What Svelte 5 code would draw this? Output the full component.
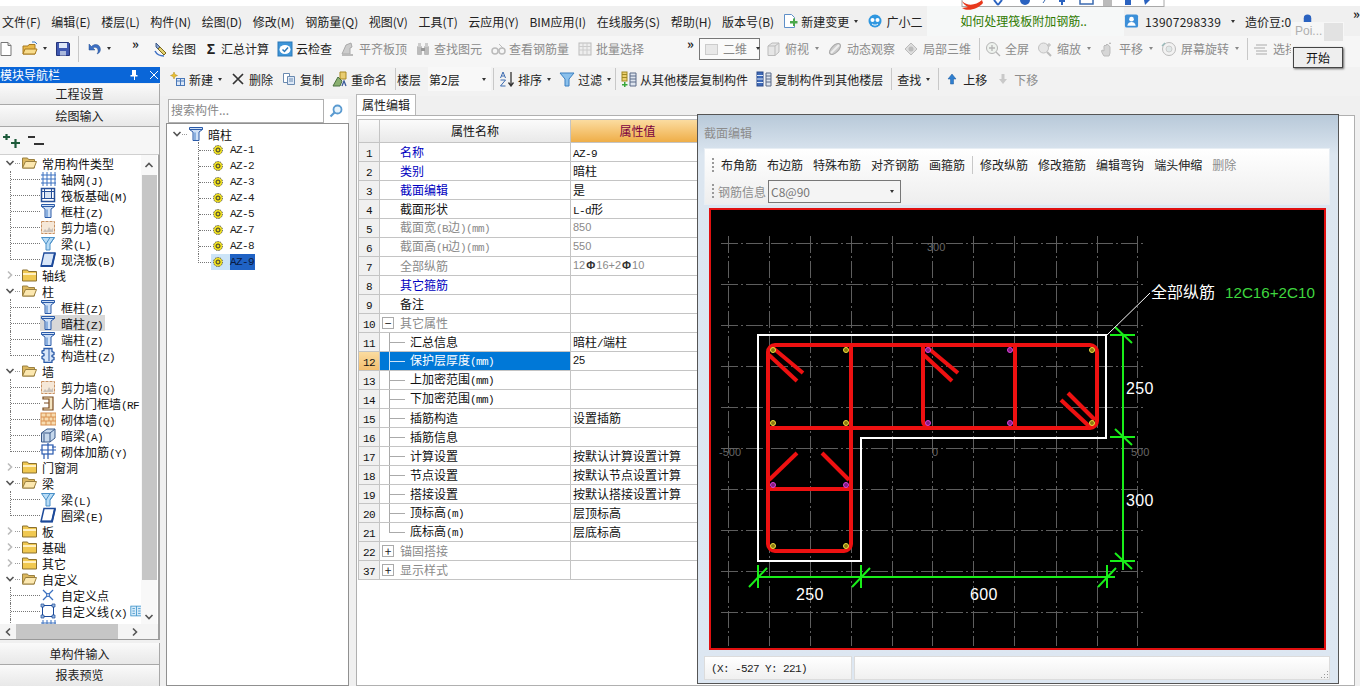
<script>
    const icons = {
        doc: '<path d="M3 1.500h7l3 3v10H3z" fill="#fff" stroke="#777"/><path d="M10 1.500v3h3" fill="#ddd" stroke="#777"/>',
        open: '<path d="M1 5h5l1-1.500h6V13H1z" fill="#e8b84a" stroke="#a87a20"/><path d="M3 8h12l-2 5H1z" fill="#f8dc8c" stroke="#a87a20"/><path d="M10 1l3 0 2 2" fill="none" stroke="#3a7bc8"/>',
        save: '<path d="M1.500 1.500h12l1 1v12h-13z" fill="#3f58b0" stroke="#26357a"/><rect x="4" y="2" width="8" height="5" fill="#dfe8f8"/><rect x="5" y="10" width="6" height="4.500" fill="#aab8dc"/>',
        undo: '<path d="M3 3v6h6L7 7c2-1.500 4.500-.5 5 2 .3 1.600-.2 3-1 4 3-1 4-4 3-6.500C12.800 3 8.500 2.500 5.500 5.500z" fill="#3d6fc4" stroke="#27508f" stroke-width=".5"/>',
        draw: '<path d="M3 2l5 5-1 3-4-4z" fill="#8aa2c8" stroke="#3d5a8a"/><path d="M7 6l6 6-2 2-6-6z" fill="#e0d070" stroke="#7d6a20"/><path d="M2 10c2 4 6 5 9 5" fill="none" stroke="#3d6fc4" stroke-width="1.500"/>',
        cloud: '<rect x="1" y="1" width="14" height="14" fill="#3e95d8" stroke="#2a78b8"/><ellipse cx="8" cy="8.500" rx="5.500" ry="4.500" fill="#fff"/><path d="M5.500 8.500l2 2 3.500-4" fill="none" stroke="#2a78b8" stroke-width="1.500"/>',
        level: '<path d="M2 13l4-9 5-2 1 4-2 1v6z" fill="#ccc" stroke="#aaa"/><rect x="2" y="13" width="11" height="2" fill="#bbb"/>',
        find: '<rect x="2" y="5" width="5" height="9" rx="1" fill="#bbb"/><rect x="9" y="5" width="5" height="9" rx="1" fill="#bbb"/><rect x="3" y="2" width="3" height="4" fill="#ccc"/><rect x="10" y="2" width="3" height="4" fill="#ccc"/><rect x="6" y="7" width="4" height="3" fill="#999"/>',
        glass: '<circle cx="5" cy="10" r="3" fill="none" stroke="#bbb" stroke-width="1.500"/><circle cx="12" cy="10" r="3" fill="none" stroke="#bbb" stroke-width="1.500"/><path d="M8 9h1M9 3l4 4" stroke="#bbb"/>',
        batch: '<rect x="2" y="2" width="12" height="12" fill="#eee" stroke="#bbb"/><path d="M2 5.500h12M2 9h12M6 2v12M10 2v12" stroke="#ccc"/>',
        square: '<rect x="1.500" y="3.500" width="12" height="10" fill="#e8e8e8" stroke="#ccc"/>',
        top: '<path d="M3 5l4-3h7v9l-4 3.500H3z" fill="#e6e6e6" stroke="#bbb"/><path d="M3 5h7v9.500M10 5l4-3" fill="none" stroke="#bbb"/>',
        orbit: '<ellipse cx="8" cy="8" rx="7" ry="3.500" transform="rotate(-45 8 8)" fill="#ccc" stroke="#aaa"/><path d="M4 12l8-8" stroke="#eee" stroke-width="2"/>',
        local: '<path d="M8 2l6 6-6 6-6-6z" fill="#ddd" stroke="#bbb"/><circle cx="8" cy="8" r="2.500" fill="#bbb"/>',
        full: '<circle cx="7" cy="7" r="5.500" fill="#eef2ee" stroke="#b5b5b5"/><path d="M7 4v6M4 7h6M11 11l4 4" stroke="#b5b5b5" stroke-width="1.300"/>',
        zoom: '<circle cx="6.500" cy="7" r="5" fill="#e6e6e6" stroke="#c2c2c2"/><path d="M10 11l4 4" stroke="#bbb" stroke-width="2"/><path d="M12 2v4M10 4h4" stroke="#bbb"/>',
        pan: '<path d="M5 15c-2-3-3-5-2-6l2 1V5l1-1 1 1V4l1-1 1 1 1 .5 1 1.500 0 6-1 3z" fill="#d6d6d6" stroke="#bbb"/><path d="M11 1l1 2h-2z" fill="#aaa"/>',
        rotate: '<circle cx="8" cy="8" r="6.500" fill="#f2f2f2" stroke="#bbb"/><circle cx="8" cy="8" r="3" fill="#e0e8e8" stroke="#ccc"/><path d="M1 5l3-3" stroke="#9bb" stroke-width="1.500"/>',
        select: '<path d="M3 4h11M1 7h11M3 10h11M3 13h11" stroke="#c4c4c4" stroke-width="1.500"/>',
        change: '<path d="M2.500 1.500h7l3 3v10h-10z" fill="#fff" stroke="#5e8fc8"/><path d="M8 8h3V5.500h2V8h2.500v2.500H13V13h-2v-2.500H8z" fill="#4aa84a"/>',
        bot: '<circle cx="8" cy="8" r="6.500" fill="#2f97e0"/><circle cx="5.500" cy="7" r="2" fill="#fff"/><circle cx="10.500" cy="7" r="2" fill="#fff"/><path d="M5 11c2 1.500 4 1.500 6 0" fill="none" stroke="#fff"/>',
        user: '<rect x="1" y="1" width="14" height="14" rx="2" fill="#3c8fd8"/><circle cx="8" cy="6" r="2.500" fill="#fff"/><path d="M3.500 13c.5-3 2.500-4 4.500-4s4 1 4.500 4z" fill="#fff"/>',
        bell: '<path d="M4 11V5a4 4 0 0 1 8 0v6z" fill="#2a62c0"/>',
        add: '<path d="M4 1l1 2.500 2.500 1L5 5.500 4 8 3 5.500.5 4.500 3 3.500z" fill="#e8c030" stroke="#b08818" stroke-width=".5"/><rect x="6.500" y="7.500" width="8" height="7" fill="#dce8f8" stroke="#4a78b8"/><path d="M6.500 10h8M10.500 7.500v7" stroke="#4a78b8"/>',
        del: '<path d="M3 3l10 10M13 3L3 13" stroke="#333" stroke-width="1.700"/>',
        copy: '<path d="M2.500 2.500h6v9h-6z" fill="#fff" stroke="#6a8ab0"/><path d="M6.500 5.500h7v8h-7z" fill="#dde8f6" stroke="#6a8ab0"/><path d="M8 8h4M8 10h4" stroke="#6a8ab0"/>',
        rename: '<path d="M8 1h6v7H8z" fill="#e8cc70" stroke="#aa8820"/><path d="M1 15l5-9 4 4-2 5z" fill="#8ab070" stroke="#4a7040"/><path d="M10 15l2-5 2 5" fill="none" stroke="#3a5a9a" stroke-width="1.300"/>',
        sort: '<path d="M4 1L1.500 7M4 1l2.500 6M2.500 5h3M1.500 9h5l-5 6h5" fill="none" stroke="#3a6ab0"/><path d="M12 1v13M9.500 11.500L12 15l2.500-3.500" fill="none" stroke="#333" stroke-width="1.300"/>',
        funnel: '<path d="M1 2h14L10 8v7H6V8z" fill="#8ac0ec" stroke="#3a7fc0"/>',
        from: '<rect x="1" y="1" width="5" height="9" fill="#ecd070" stroke="#a08820"/><path d="M1 3.500h5M1 6.500h5" stroke="#a08820"/><path d="M3 11v2h-2v1.500h2V16h1.500v-1.500h2V13h-2v-2z" fill="#3aa83a"/><path d="M9 2h6v13H9z" fill="#dde4ee" stroke="#5a6a88"/><path d="M9 5h6M9 8h6M9 11h6" stroke="#5a6a88"/>',
        to: '<rect x="1" y="1" width="6" height="14" fill="#3f6ab8" stroke="#2a4a8a"/><path d="M1 4.500h6M1 8h6M1 11.500h6" stroke="#dde8f8"/><path d="M10 2h5v13h-5z" fill="#dde4ee" stroke="#5a6a88"/><path d="M10 5h5M10 8h5M10 11h5" stroke="#5a6a88"/>',
        up: '<path d="M8 3l4 5h-2.500v5h-3V8H4z" fill="#2f7fd0" stroke="#1d5a9c" stroke-width=".5"/>',
        down: '<path d="M8 13l4-5H9.500V3h-3v5H4z" fill="#c9c9c9"/>',
        col: '<path d="M1.500 1.500h13v2l-3.500 2.500v8.500h-6V6L1.500 3.500z" fill="#cfe0f6" stroke="#2a5aa8"/><path d="M1.500 3.500h13" stroke="#2a5aa8"/><rect x="6" y="6.500" width="2" height="7.500" fill="#8ab0e0"/>',
        axis: '<path d="M3 1v14M7 1v14M11 1v14M15 1v14M1 4h15M1 8h15M1 12h15" stroke="#3a70c0"/>',
        raft: '<rect x="1.500" y="1.500" width="13" height="13" fill="#fff" stroke="#264f98" stroke-width="1.500"/><rect x="4.500" y="4.500" width="7" height="7" fill="#d8e4f4" stroke="#264f98"/><path d="M1.500 4.500h3M1.500 11.500h3M11.500 4.500h3M11.500 11.500h3M4.500 1.500v3M11.500 1.500v3" stroke="#264f98"/>',
        wall: '<rect x="1.500" y="2.500" width="13" height="12" fill="#f6e8d8" stroke="#c89060" stroke-dasharray="3 1"/><path d="M3 13l2-3 2 2 2-4 2 3 2-2v4z" fill="#c8c0b8"/>',
        beam: '<path d="M1.500 2.500h13L10 9v6H6V9z" fill="#b8dcf6" stroke="#4a90c8"/><path d="M10 2.500L6 9M14.500 2.500L10 9" stroke="#4a90c8"/>',
        slab: '<path d="M4 2h11l-3 13H1z" fill="#d8e6f8" stroke="#1d4a9a" stroke-width="1.300"/><path d="M1 15h11l3-13" fill="none" stroke="#1d4a9a" stroke-width="2"/>',
        gz: '<path d="M4 1.500h8v3l2 1v2l-2 1v1l2 1v2l-2 1v2H4v-3l-2-1v-2l2-1V7L2 6V4l2-.5z" fill="#d8e6f8" stroke="#2a5aa8" stroke-width="1.300"/><path d="M9 2v12" stroke="#2a5aa8"/>',
        door: '<path d="M3 2h10v13H3v-2h6V4H3z" fill="#f4e4c0" stroke="#7a4a20" stroke-width="1.200"/><path d="M4 8h5" stroke="#7a4a20"/>',
        brick: '<rect x="1" y="2" width="15" height="12" fill="#f8dcb0" stroke="#d89050"/><path d="M1 6h15M1 10h15M6 2v4M11 2v4M4 6v4M9 6v4M13 6v4M6 10v4M11 10v4" stroke="#d89050"/>',
        hbeam: '<path d="M1.500 6L7 2h8v9l-5 4H1.500z" fill="#c6d8ec" stroke="#3a5a8a"/><path d="M1.500 6H10v9M10 6l5-4" fill="none" stroke="#3a5a8a"/><path d="M4 7v8" stroke="#3a5a8a"/>',
        mesh: '<rect x="2" y="2" width="11" height="9" fill="none" stroke="#2a5ab0" stroke-width="1.200"/><path d="M0 7h16M8 0v16M4 11v5M12 4h4" stroke="#2a5ab0" stroke-width="1.200"/>',
        ring: '<path d="M4 1.500h11l-3 13H1z" fill="#fff" stroke="#1d4a9a" stroke-width="1.500"/><path d="M1 14.500h11l3-13" fill="none" stroke="#1d4a9a" stroke-width="2"/>',
        point: '<path d="M3 3l10 10M13 3L3 13" stroke="#3a70c0" stroke-width="1.300"/><circle cx="8" cy="8" r="1.500" fill="#e8eef8" stroke="#3a70c0"/>',
        line: '<rect x="2.500" y="2.500" width="11" height="11" fill="#fff" stroke="#1d4a9a"/><path d="M1 1h3v3H1zM12 1h3v3h-3zM1 12h3v3H1zM12 12h3v3h-3z" fill="#9ab8e0" stroke="#1d4a9a" stroke-width=".7"/>',
        book: '<rect x="1" y="2" width="14" height="12" fill="#d8ecfa" stroke="#3a90c8"/><path d="M8 2v12M3 5h3M3 8h3M3 11h3M10 5h3M10 8h3M10 11h3" stroke="#3a90c8"/>',
        folder: '<path d="M1.500 3h5l1 1.500h8V14h-14z" fill="#f0c850" stroke="#8a7030"/><path d="M2 6h13v2H2z" fill="#fff0c0"/>',
        folderOpen: '<path d="M1.500 3h5l1 1.500h6V13h-12z" fill="#dcb860" stroke="#9a8040"/><path d="M4.500 6.500h11L13 13H1.500z" fill="#fce8b0" stroke="#9a8040"/>',
        gear: '<circle cx="6" cy="6" r="4.500" fill="#f0e020" stroke="#555" stroke-dasharray="1.500 1"/><circle cx="6" cy="6" r="2" fill="#e8d810" stroke="#333"/>'
    };

    // ascii parts of bitmap-font labels are half width
    const split = (text) => text.split(/([\x00-\x7f]+)/).filter(Boolean);

    const menus = ['文件(F)', '编辑(E)', '楼层(L)', '构件(N)', '绘图(D)', '修改(M)', '钢筋量(Q)', '视图(V)', '工具(T)', '云应用(Y)', 'BIM应用(I)', '在线服务(S)', '帮助(H)', '版本号(B)'];

    const navTree = [
        { label: '常用构件类型', folder: 'open' },
        { label: '轴网(J)', icon: 'axis' },
        { label: '筏板基础(M)', icon: 'raft' },
        { label: '框柱(Z)', icon: 'col' },
        { label: '剪力墙(Q)', icon: 'wall' },
        { label: '梁(L)', icon: 'beam' },
        { label: '现浇板(B)', icon: 'slab', last: true },
        { label: '轴线', folder: 'closed' },
        { label: '柱', folder: 'open' },
        { label: '框柱(Z)', icon: 'col' },
        { label: '暗柱(Z)', icon: 'col', current: true },
        { label: '端柱(Z)', icon: 'col' },
        { label: '构造柱(Z)', icon: 'gz', last: true },
        { label: '墙', folder: 'open' },
        { label: '剪力墙(Q)', icon: 'wall' },
        { label: '人防门框墙(RF', icon: 'door' },
        { label: '砌体墙(Q)', icon: 'brick' },
        { label: '暗梁(A)', icon: 'hbeam' },
        { label: '砌体加筋(Y)', icon: 'mesh', last: true },
        { label: '门窗洞', folder: 'closed' },
        { label: '梁', folder: 'open' },
        { label: '梁(L)', icon: 'beam' },
        { label: '圈梁(E)', icon: 'ring', last: true },
        { label: '板', folder: 'closed' },
        { label: '基础', folder: 'closed' },
        { label: '其它', folder: 'closed' },
        { label: '自定义', folder: 'open' },
        { label: '自定义点', icon: 'point' },
        { label: '自定义线(X)', icon: 'line', extra: 'book' },
        { label: '', icon: 'axis' }
    ];

    const parts = ['AZ-1', 'AZ-2', 'AZ-3', 'AZ-4', 'AZ-5', 'AZ-7', 'AZ-8', 'AZ-9'];

    const props = [
        { n: 1, name: '名称', value: 'AZ-9', tone: 'blue' },
        { n: 2, name: '类别', value: '暗柱', tone: 'blue' },
        { n: 3, name: '截面编辑', value: '是', tone: 'blue' },
        { n: 4, name: '截面形状', value: 'L-d形' },
        { n: 5, name: '截面宽(B边)(mm)', value: '850', tone: 'gray', num: true },
        { n: 6, name: '截面高(H边)(mm)', value: '550', tone: 'gray', num: true },
        { n: 7, name: '全部纵筋', value: '12Φ16+2Φ10', tone: 'gray', num: true },
        { n: 8, name: '其它箍筋', value: '', tone: 'blue' },
        { n: 9, name: '备注', value: '' },
        { n: 10, name: '其它属性', value: '', tone: 'gray', box: '−' },
        { n: 11, name: '汇总信息', value: '暗柱/端柱', child: true },
        { n: 12, name: '保护层厚度(mm)', value: '25', child: true, active: true, num: true },
        { n: 13, name: '上加密范围(mm)', value: '', child: true },
        { n: 14, name: '下加密范围(mm)', value: '', child: true },
        { n: 15, name: '插筋构造', value: '设置插筋', child: true },
        { n: 16, name: '插筋信息', value: '', child: true },
        { n: 17, name: '计算设置', value: '按默认计算设置计算', child: true },
        { n: 18, name: '节点设置', value: '按默认节点设置计算', child: true },
        { n: 19, name: '搭接设置', value: '按默认搭接设置计算', child: true },
        { n: 20, name: '顶标高(m)', value: '层顶标高', child: true },
        { n: 21, name: '底标高(m)', value: '层底标高', child: true, last: true },
        { n: 22, name: '锚固搭接', value: '', tone: 'gray', box: '+' },
        { n: 37, name: '显示样式', value: '', tone: 'gray', box: '+' }
    ];

    const sectionTools = ['布角筋', '布边筋', '特殊布筋', '对齐钢筋', '画箍筋'];
    const sectionTools2 = ['修改纵筋', '修改箍筋', '编辑弯钩', '端头伸缩'];

    const gridX = [728, 769, 810, 851, 892, 932, 973, 1014, 1056, 1097, 1137];
    const gridY = [243, 284, 325, 366, 407, 448, 489, 530, 571, 612];

    const yellowBars = [[773, 350], [846, 350], [773, 423], [846, 423], [1092, 350], [1092, 423], [773, 546], [846, 546]];
    const pinkBars = [[928, 350], [1010, 350], [928, 423], [1010, 423], [773, 485], [846, 485]];

    const hooks = [
        [773, 348, 803, 373], [769, 355, 797, 381],
        [928, 348, 958, 373], [924, 355, 952, 381],
        [1068, 393, 1095, 420], [1061, 400, 1090, 427],
        [797, 453, 769, 480], [822, 453, 849, 480]
    ];

    // green dimension ticks
    const ticksH = [758, 861, 1107];
    const ticksV = [335, 437, 561];
</script>

{#snippet ic(name, cls = '')}
    <svg class="ic {cls}" viewBox="0 0 16 16" aria-hidden="true">{@html icons[name]}</svg>
{/snippet}

{#snippet tool(name, text, drop = false, off = false)}
    <span class="tool" class:off>
        {#if name}{@render ic(name)}{/if}
        {#if text}<span>{text}</span>{/if}
        {#if drop}<i class="drop"></i>{/if}
    </span>
{/snippet}

{#snippet mixed(text)}
    {#each split(text) as bit}
        {#if /^[\x00-\x7f]/.test(bit)}<span class="asc">{bit}</span>{:else}{bit}{/if}
    {/each}
{/snippet}

{#snippet chevron(open)}
    <svg class="chev" viewBox="0 0 10 10" aria-hidden="true">
        {#if open}
            <path d="M1.500 3l3.500 3.500L8.500 3" fill="none" stroke="#555" stroke-width="1.600" />
        {:else}
            <path d="M3 1.500L6.500 5 3 8.500" fill="none" stroke="#bbb" stroke-width="1.600" />
        {/if}
    </svg>
{/snippet}

<div class="app">
    <div class="strip"></div>

    <div class="menubar">
        <div class="menus">
            {#each menus as m}<span>{m}</span>{/each}
        </div>
        <div class="menu-extra">
            {@render tool('change', '新建变更', true)}
            {@render tool('bot', '广小二')}
        </div>
        <div class="news">如何处理筏板附加钢筋..</div>
        <div class="account">
            {@render tool('user', '13907298339', true)}
            <span class="beans">造价豆:0</span>
            {@render ic('bell')}
        </div>
        <span class="more">»</span>
    </div>

    <div class="toolbar">
        <div class="tb-left">
            {@render ic('doc')}
            {@render tool('open', '', true)}
            {@render ic('save')}
            <i class="sep"></i>
            {@render tool('undo', '', true)}
        </div>
        <div class="tb-mid">
            <span class="more-in">»</span>
            {@render tool('draw', '绘图')}
            <span class="tool sigma"><b>Σ</b><span>汇总计算</span></span>
            {@render tool('cloud', '云检查')}
            {@render tool('level', '平齐板顶', false, true)}
            {@render tool('find', '查找图元', false, true)}
            {@render tool('glass', '查看钢筋量', false, true)}
            {@render tool('batch', '批量选择', false, true)}
            <span class="more-in end">»</span>
        </div>
        <div class="tb-right">
            <span class="view-combo">{@render ic('square')}<span>二维</span><i class="drop"></i></span>
            {@render tool('top', '俯视', true, true)}
            {@render tool('orbit', '动态观察', false, true)}
            {@render tool('local', '局部三维', false, true)}
            <i class="sep"></i>
            {@render tool('full', '全屏', false, true)}
            {@render tool('zoom', '缩放', true, true)}
            {@render tool('pan', '平移', true, true)}
            {@render tool('rotate', '屏幕旋转', true, true)}
            <i class="sep"></i>
            {@render tool('select', '选择', false, true)}
        </div>
    </div>

    <div class="body">
        <aside class="nav">
            <div class="nav-head">
                <span>模块导航栏</span>
                <svg class="pin" viewBox="0 0 10 12" aria-hidden="true"><path d="M3 1h4v5h1.500v1.500h-2.500V11H5V7.500H1.500V6H3z" fill="#fff" /></svg>
                <svg class="close" viewBox="0 0 10 10" aria-hidden="true"><path d="M1 1l8 8M9 1L1 9" stroke="#fff" /></svg>
            </div>
            <div class="nav-btn first">工程设置</div>
            <div class="nav-btn second">绘图输入</div>
            <div class="nav-tools">
                <svg viewBox="0 0 22 16" aria-hidden="true"><path d="M1 4h7M4.500 1v6M9 10h9M13.500 6v9" stroke="#1d5a3a" stroke-width="2.200" /></svg>
                <svg viewBox="0 0 22 16" aria-hidden="true"><path d="M2 4h7M8 11h10" stroke="#333" stroke-width="2.200" /></svg>
            </div>
            <div class="nav-tree">
                <div class="nav-rows">
                    {#each navTree as row}
                        {#if row.folder}
                            <div class="row">
                                <span class="arrow">{@render chevron(row.folder === 'open')}</span>
                                <i class="stub"></i>
                                {@render ic(row.folder === 'open' ? 'folderOpen' : 'folder')}
                                <span class="lbl">{@render mixed(row.label)}</span>
                            </div>
                        {:else}
                            <div class="row">
                                <span class="twig" class:last={row.last}><i></i></span>
                                <span class="leaf" class:current={row.current}>
                                    {@render ic(row.icon)}
                                    <span class="lbl">{@render mixed(row.label)}</span>
                                </span>
                                {#if row.extra}{@render ic(row.extra, 'extra')}{/if}
                            </div>
                        {/if}
                    {/each}
                </div>
                <div class="vbar">
                    <svg viewBox="0 0 10 10" aria-hidden="true"><path d="M1.500 7L5 3.500 8.500 7" fill="none" stroke="#555" stroke-width="1.600" /></svg>
                    <div class="vthumb"></div>
                    <svg viewBox="0 0 10 10" aria-hidden="true"><path d="M1.500 3L5 6.500 8.500 3" fill="none" stroke="#555" stroke-width="1.600" /></svg>
                </div>
            </div>
            <div class="hbar">
                <svg viewBox="0 0 10 10" aria-hidden="true"><path d="M7 1.500L3.500 5 7 8.500" fill="none" stroke="#555" stroke-width="1.600" /></svg>
                <div class="hthumb"></div>
                <svg viewBox="0 0 10 10" aria-hidden="true"><path d="M3 1.500L6.500 5 3 8.500" fill="none" stroke="#555" stroke-width="1.600" /></svg>
            </div>
            <div class="nav-btn single">单构件输入</div>
            <div class="nav-btn report">报表预览</div>
        </aside>

        <div class="work">
            <div class="actions">
                {@render tool('add', '新建', true)}
                {@render tool('del', '删除')}
                {@render tool('copy', '复制')}
                {@render tool('rename', '重命名')}
                <i class="sep"></i>
                <span class="floor-label">楼层</span>
                <span class="floor">第2层<i class="drop"></i></span>
                <i class="sep"></i>
                {@render tool('sort', '排序', true)}
                {@render tool('funnel', '过滤', true)}
                <i class="sep near"></i>
                {@render tool('from', '从其他楼层复制构件')}
                {@render tool('to', '复制构件到其他楼层')}
                <i class="sep"></i>
                <span class="tool"><span>查找</span><i class="drop"></i></span>
                <i class="sep"></i>
                {@render tool('up', '上移')}
                {@render tool('down', '下移', false, true)}
            </div>

            <div class="panes">
                <div class="parts">
                    <div class="search">
                        <span class="search-box">搜索构件...</span>
                        <span class="search-btn">
                            <svg viewBox="0 0 16 16" aria-hidden="true"><circle cx="9.500" cy="6.500" r="4" fill="#e8f4fc" stroke="#5a9ad0" stroke-width="1.800" /><path d="M6.500 9.500L2.500 13.500" stroke="#5a9ad0" stroke-width="2.200" /></svg>
                        </span>
                    </div>
                    <div class="part-tree">
                        <div class="part-root">
                            <span class="arrow">{@render chevron(true)}</span>
                            <i class="stub"></i>
                            {@render ic('col')}
                            <span class="lbl">暗柱</span>
                        </div>
                        {#each parts as p, i}
                            <div class="part-row">
                                <span class="twig small" class:last={i === parts.length - 1}><i></i></span>
                                <span class="part-item" class:sel={p === 'AZ-9'}>
                                    <svg class="gear" viewBox="0 0 12 12" aria-hidden="true">{@html icons.gear}</svg>
                                    <span class="asc">{p}</span>
                                </span>
                            </div>
                        {/each}
                    </div>
                </div>

                <div class="props">
                    <div class="tabs"><span class="tab">属性编辑</span></div>
                    <div class="sheet">
                        <div class="grid">
                            <div class="grid-row head">
                                <span class="c-num"></span>
                                <span class="c-name">属性名称</span>
                                <span class="c-val">属性值</span>
                            </div>
                            {#each props as p}
                                <div class="grid-row" class:active={p.active}>
                                    <span class="c-num"><span class="asc">{p.n}</span></span>
                                    <span class="c-name {p.tone ?? ''}" class:plain={!p.child && !p.box}>
                                        {#if p.box}<span class="box">{p.box}</span>{/if}
                                        {#if p.child}<span class="branch" class:last={p.last}><i></i></span>{/if}
                                        <span>{@render mixed(p.name)}</span>
                                    </span>
                                    <span class="c-val {p.tone === 'gray' ? 'gray' : ''}" class:num={p.num}>
                                        {#if p.num}
                                            {#each p.value.split('Φ') as piece, i}
                                                {#if i > 0}<b class="rebar">Φ</b>{/if}{piece}
                                            {/each}
                                        {:else}
                                            {@render mixed(p.value)}
                                        {/if}
                                    </span>
                                </div>
                            {/each}
                        </div>
                    </div>
                </div>
            </div>
        </div>
    </div>

    <!-- floating section editor window -->
    <div class="dialog">
        <div class="dlg-title">截面编辑</div>
        <div class="dlg-tools">
            <div class="dlg-row">
                <i class="grip"></i>
                {#each sectionTools as t}<span>{t}</span>{/each}
                <i class="sep"></i>
                {#each sectionTools2 as t}<span>{t}</span>{/each}
                <span class="off">删除</span>
            </div>
            <div class="dlg-row second">
                <i class="grip"></i>
                <span class="off">钢筋信息</span>
                <span class="rebar-combo">C8@90<i class="drop"></i></span>
            </div>
        </div>
        <div class="canvas">
            <svg viewBox="711 210 613 438" role="img" aria-label="截面图">
                <g stroke="#5e5e5e" stroke-dasharray="17 3 2 3" shape-rendering="crispEdges">
                    {#each gridX as x}<line x1={x} y1="236" x2={x} y2="646" />{/each}
                    {#each gridY as y}<line x1="721" y1={y} x2="1145" y2={y} />{/each}
                </g>
                <g class="axis-num">
                    <text x="927" y="251">300</text>
                    <text x="719" y="456">-500</text>
                    <text x="932" y="456">0</text>
                    <text x="1131" y="456">500</text>
                </g>

                <path d="M758 335H1106V438H861V561H758Z" fill="none" stroke="#fff" stroke-width="2" />

                <g fill="none" stroke="#ee1111" stroke-width="4">
                    <path d="M768 428V352a7 7 0 0 1 7-7H1090a7 7 0 0 1 7 7V421a7 7 0 0 1-7 7H768" />
                    <path d="M768 428V544a7 7 0 0 0 7 7H844a7 7 0 0 0 7-7V345" />
                    <path d="M923 345V421a7 7 0 0 0 7 7M1015 345V428" />
                    <path d="M768 489H851" />
                    {#each hooks as h}<line x1={h[0]} y1={h[1]} x2={h[2]} y2={h[3]} />{/each}
                </g>

                {#each yellowBars as b}<circle cx={b[0]} cy={b[1]} r="2.500" fill="#8a7a10" stroke="#f0e040" />{/each}
                {#each pinkBars as b}<circle cx={b[0]} cy={b[1]} r="2.500" fill="#802080" stroke="#e040e0" />{/each}

                <g stroke="#19ee19" stroke-width="2" fill="none">
                    <path d="M758 577H1115M1123 335V570" />
                    {#each ticksH as x}
                        <path d="M{x} 565V588M{x - 9} 587L{x + 9} 568" />
                    {/each}
                    {#each ticksV as y}
                        <path d="M1110 {y}H1135M1115 {y - 8}L1132 {y + 8}" />
                    {/each}
                </g>

                <path d="M1107 335L1150 293" stroke="#fff" />
                <text class="note" x="1151" y="298">全部纵筋</text>
                <text class="note-green" x="1225" y="298">12C16+2C10</text>
                <g class="dim">
                    <text x="1126" y="394">250</text>
                    <text x="1126" y="506">300</text>
                    <text x="796" y="600">250</text>
                    <text x="970" y="600">600</text>
                </g>
            </svg>
        </div>
        <div class="dlg-status">
            <span class="coord"><span class="asc">(X: -527 Y: 221)</span></span>
            <span class="status-rest">
                <svg viewBox="0 0 9 9" aria-hidden="true"><path d="M7 1h1v1H7zM4 4h1v1H4zM7 4h1v1H7zM1 7h1v1H1zM4 7h1v1H4zM7 7h1v1H7z" fill="#999" /></svg>
            </span>
        </div>
    </div>

    <!-- input method bar clipped by the top of the screen -->
    <div class="ime">
        <svg viewBox="0 0 206 12" aria-hidden="true">
            <rect x="2" y="-2" width="202" height="8.500" fill="#fff" stroke="#a8a8a8" />
            <path d="M2 1c6 6 14 4 20-1l1 3c-5 6-15 9-21 5l6-1C6 6 3 4 2 1z" fill="#e8381c" />
            <path d="M34 0l4 5M42 0l-4 5" stroke="#2a62c0" stroke-width="2" />
            <circle cx="65" cy="0" r="5" fill="#2a62c0" />
            <path d="M85 0l-2 3" stroke="#3a6ab0" />
            <path d="M99 0h6v2h-2v3h-2V2h-2z" fill="#2a62c0" />
            <rect x="120" y="-3" width="13" height="7" fill="none" stroke="#3a6ab0" stroke-width="1.500" />
            <rect x="143" y="-3" width="9" height="9" fill="#bbb" />
            <rect x="165" y="-3" width="6" height="8" fill="#2a62c0" />
            <path d="M184 0l6 0-5 5z" fill="#2a62c0" />
        </svg>
    </div>

    <!-- taskbar preview tooltip -->
    <div class="peek">
        <div class="peek-top"><span>Poi...</span><i></i></div>
        <div class="peek-btn">开始</div>
    </div>
</div>

<style>
    :global(body) {
        margin: 0;
        background: #f0f0f0;
    }

    .app {
        position: relative;
        width: 1360px;
        height: 686px;
        overflow: hidden;
        display: flex;
        flex-direction: column;
        font-family: "Noto Sans CJK SC", "Liberation Sans", sans-serif;
        font-size: 12px;
        color: #222;
        background: #f0f0f0;
    }

    .ic {
        flex: 0 0 16px;
        width: 16px;
        height: 16px;
    }

    .asc {
        font-family: "Liberation Mono", monospace;
        font-size: 11px;
        letter-spacing: -.6px;
    }

    .sep {
        flex: 0 0 1px;
        width: 1px;
        height: 22px;
        background: #c8c8c8;
    }

    .drop {
        display: inline-block;
        width: 0;
        height: 0;
        margin-left: 5px;
        border: 2.5px solid transparent;
        border-top: 3px solid #333;
        border-bottom: 0;
    }

    .tool {
        display: inline-flex;
        align-items: center;
        gap: 3px;
        white-space: nowrap;
    }

    .tool .drop {
        margin-left: 2px;
    }

    .tool.off {
        color: #8c8c8c;
    }

    .tool.off .drop {
        border-top-color: #888;
    }

    .strip {
        height: 6px;
        background: #fff;
    }

    .menubar {
        height: 30px;
        flex: 0 0 30px;
        display: flex;
        align-items: center;
        background: #f0f0f0;
        white-space: nowrap;
    }

    .menus {
        display: flex;
        gap: 10.6px;
        width: 783px;
        padding-left: 2px;
        box-sizing: border-box;
    }

    .menu-extra {
        display: flex;
        gap: 9px;
        width: 145px;
    }

    .news {
        width: 197px;
        height: 30px;
        line-height: 30px;
        padding-left: 33px;
        box-sizing: border-box;
        color: #2f7a00;
        background: #f6f8f8;
    }

    .account {
        display: flex;
        align-items: center;
        gap: 21px;
    }

    .account .tool {
        gap: 6px;
        letter-spacing: .25px;
    }

    .account .tool .drop {
        margin-left: 4px;
    }

    .account .ic {
        width: 15px;
        flex-basis: 15px;
    }

    .beans {
        margin-left: -11px;
        margin-right: -12px;
    }

    .more {
        margin-left: 38px;
        font-size: 13px;
        font-weight: 700;
        line-height: 12px;
        margin-top: -14px;
    }

    .toolbar {
        height: 31px;
        flex: 0 0 31px;
        box-sizing: border-box;
        padding-bottom: 6px;
        display: flex;
        align-items: center;
        background: #f6f6f6;
        white-space: nowrap;
    }

    .tb-left {
        width: 131px;
        display: flex;
        align-items: center;
        gap: 8px;
        margin-left: -2px;
    }

    .tb-left .sep {
        height: 26px;
        margin: 0 -1px;
    }

    .tb-mid {
        width: 571px;
        flex: 0 0 571px;
        display: flex;
        align-items: center;
        gap: 8px;
    }

    .more-in {
        width: 13px;
        font-size: 13px;
        font-weight: 700;
        line-height: 12px;
        margin: -10px 0 0 3px;
    }

    .more-in.end {
        margin-left: auto;
    }

    .sigma b {
        width: 14px;
        font: 700 14px "Liberation Sans", sans-serif;
        color: #222;
        text-align: center;
    }

    .tb-right {
        flex: 1;
        display: flex;
        align-items: center;
        gap: 5px;
        margin-left: -2px;
    }

    .tb-right .tool {
        gap: 4px;
        margin-right: 3px;
    }

    .view-combo {
        display: flex;
        align-items: center;
        box-sizing: border-box;
        width: 61px;
        height: 22px;
        margin-left: 1px;
        padding-left: 4px;
        gap: 3px;
        color: #888;
        border: 1px solid #777;
        background: #fafafa;
    }

    .view-combo .drop {
        margin-left: 6px;
    }

    .body {
        flex: 1;
        display: flex;
        min-height: 0;
    }

    .nav {
        flex: 0 0 160px;
        width: 160px;
        display: flex;
        flex-direction: column;
        overflow: hidden;
    }

    .nav-head {
        flex: 0 0 16px;
        display: flex;
        align-items: center;
        margin-bottom: 1px;
        background: #0a66d8;
        color: #fff;
        line-height: 16px;
        white-space: nowrap;
    }

    .nav-head span {
        width: 129px;
    }

    .pin {
        width: 10px;
        height: 12px;
    }

    .close {
        width: 10px;
        height: 10px;
        margin-left: 10px;
    }

    .nav-btn {
        text-align: center;
        box-sizing: border-box;
        border-bottom: 1px solid #a8a8a8;
        border-right: 1px solid #a8a8a8;
        background: linear-gradient(#fafafa, #e8e8e8);
    }

    .nav-btn.first {
        flex: 0 0 21px;
        height: 21px;
        line-height: 20px;
    }

    .nav-btn.second {
        flex: 0 0 22px;
        height: 22px;
        line-height: 21px;
    }

    .nav-btn.single {
        flex: 0 0 22px;
        height: 22px;
        line-height: 21px;
        margin-top: 3px;
    }

    .nav-btn.report {
        flex: 0 0 21px;
        height: 21px;
        line-height: 20px;
        border-bottom: 0;
    }

    .nav-tools {
        flex: 0 0 27px;
        display: flex;
        align-items: center;
        gap: 2px;
        padding-left: 2px;
        box-sizing: border-box;
        background: #f6f6f6;
        border-right: 1px solid #a8a8a8;
    }

    .nav-tools svg {
        width: 22px;
        height: 16px;
    }

    .nav-tree {
        flex: 0 0 470px;
        height: 470px;
        min-height: 0;
        overflow: hidden;
        display: flex;
        background: #fff;
        border-right: 2px solid #a0a0a0;
        border-top: 1px solid #d0d0d0;
        box-sizing: border-box;
    }

    .nav-rows {
        width: 141px;
        overflow: hidden;
    }

    .row {
        height: 16px;
        display: flex;
        align-items: center;
        white-space: nowrap;
    }

    .lbl {
        white-space: nowrap;
        color: #111;
    }

    .arrow {
        flex: 0 0 15px;
        display: flex;
        justify-content: center;
    }

    .chev {
        width: 10px;
        height: 10px;
        margin-left: 5px;
    }

    .stub {
        flex: 0 0 5px;
        height: 0;
        margin-right: 1px;
        border-top: 1px dotted #999;
    }

    .row > .ic {
        margin-right: 5px;
    }

    .twig {
        flex: 0 0 30px;
        box-sizing: border-box;
        height: 16px;
        margin-left: 10px;
        border-left: 1px dotted #777;
    }

    .twig i {
        display: block;
        height: 8px;
        border-bottom: 1px dotted #777;
    }

    .twig.last {
        border-left: 0;
    }

    .twig.last i {
        border-left: 1px dotted #777;
    }

    .leaf {
        display: inline-flex;
        align-items: center;
        gap: 5px;
        padding-right: 2px;
        height: 16px;
    }

    .leaf.current {
        background: #d8d8d8;
    }

    .extra.ic {
        width: 13px;
        flex-basis: 13px;
        margin: 0 0 0 1px;
    }

    .vbar {
        width: 16px;
        display: flex;
        flex-direction: column;
        align-items: center;
        background: #f8f8f8;
    }

    .vbar svg {
        flex: 0 0 10px;
        width: 10px;
        margin: 5px 0;
    }

    .vthumb {
        flex: 0 0 405px;
        width: 15px;
        margin-bottom: 27px;
        background: #c6c6c6;
    }

    .hbar {
        flex: 0 0 16px;
        height: 16px;
        box-sizing: border-box;
        display: flex;
        align-items: center;
        background: #f4f4f4;
        border-right: 2px solid #a0a0a0;
        border-bottom: 1px solid #999;
    }

    .hbar svg {
        width: 10px;
        height: 10px;
        margin: 0 3px;
    }

    .hthumb {
        width: 102px;
        height: 15px;
        background: #c6c6c6;
        margin-right: 9px;
    }

    .work {
        flex: 1;
        display: flex;
        flex-direction: column;
        min-width: 0;
    }

    .actions {
        flex: 0 0 29px;
        box-sizing: border-box;
        padding: 0 0 5px 10px;
        display: flex;
        align-items: center;
        gap: 8px;
        white-space: nowrap;
        background: #f2f2f2;
    }

    .actions .sep {
        margin-right: -3px;
    }

    .actions .sep.near {
        margin-left: -4px;
    }

    .floor-label {
        margin-left: -4px;
    }

    .floor {
        display: flex;
        align-items: center;
        width: 63px;
        height: 24px;
        margin: 0 -6px 0 -1px;
        padding-left: 1px;
        box-sizing: border-box;
        background: #f8f8f8;
    }

    .floor .drop {
        margin-left: 22px;
    }

    .panes {
        flex: 1;
        display: flex;
        min-height: 0;
    }

    .parts {
        flex: 0 0 190px;
        width: 190px;
        box-sizing: border-box;
        padding: 3px 1px 0 6px;
        display: flex;
        flex-direction: column;
    }

    .search {
        flex: 0 0 24px;
        display: flex;
        margin-left: 2px;
    }

    .search-box {
        box-sizing: border-box;
        width: 156px;
        height: 24px;
        line-height: 20px;
        padding-left: 2px;
        color: #888;
        background: #fff;
        border: 1px solid #b0b0b0;
    }

    .search-btn {
        width: 24px;
        height: 24px;
        display: flex;
        align-items: center;
        justify-content: center;
        background: #fff;
    }

    .search-btn svg {
        width: 16px;
        height: 16px;
    }

    .part-tree {
        flex: 1;
        background: #fff;
        border: 1px solid #909090;
        padding-top: 2px;
    }

    .part-root,
    .part-row {
        height: 16px;
        display: flex;
        align-items: center;
    }

    .part-root .ic {
        margin-right: 4px;
    }

    .twig.small {
        flex: 0 0 13px;
        margin-left: 31px;
    }

    .part-item {
        display: flex;
        align-items: center;
        height: 16px;
        padding-left: 1px;
    }

    .gear {
        width: 12px;
        height: 12px;
        margin-right: 6px;
    }

    .part-item.sel {
        padding-right: 1px;
        background: linear-gradient(90deg, #cce4f7 0 19px, #1f62c4 19px 44px, #cce4f7 44px);
    }

    .part-item.sel .asc {
        color: #0a1a40;
    }

    .props {
        flex: 1;
        display: flex;
        flex-direction: column;
        margin: -2px 5px 0 6px;
        min-width: 0;
    }

    .tabs {
        flex: 0 0 20px;
        display: flex;
    }

    .tab {
        box-sizing: border-box;
        width: 60px;
        height: 21px;
        line-height: 19px;
        text-align: center;
        background: #fff;
        border: 1px solid #b8b8b8;
        border-bottom: 0;
        position: relative;
        z-index: 1;
    }

    .sheet {
        flex: 1;
        background: #fff;
        border: 1px solid #b0b0b0;
        padding: 3px 0 0 1px;
    }

    .grid {
        width: 345px;
        border-top: 1px solid #c0c0c0;
        border-left: 1px solid #c0c0c0;
    }

    .grid-row {
        display: flex;
        height: 19px;
        line-height: 18px;
        border-bottom: 1px solid #c4c4c4;
        box-sizing: border-box;
        color: #111;
    }

    .grid-row.head {
        height: 23px;
        line-height: 22px;
    }

    .c-num {
        flex: 0 0 21px;
        text-align: center;
        box-sizing: border-box;
        background: #f0f0f0;
        border-right: 1px solid #c4c4c4;
    }

    .c-name {
        flex: 0 0 191px;
        box-sizing: border-box;
        display: flex;
        align-items: center;
        border-right: 1px solid #c4c4c4;
        white-space: nowrap;
    }

    .c-name.plain {
        padding-left: 20px;
    }

    .c-val {
        flex: 1;
        padding-left: 2px;
        white-space: nowrap;
    }

    .c-val.num {
        font: 11px "Liberation Sans", sans-serif;
        line-height: 17px;
    }

    .rebar {
        color: #333;
        margin: 0 1px;
    }

    .c-name.blue {
        color: #0000c0;
    }

    .gray {
        color: #8a8a8a;
    }

    .head .c-name {
        justify-content: center;
        background: linear-gradient(#fbfbfb, #e9e9e9);
    }

    .head .c-num {
        background: linear-gradient(#fbfbfb, #e9e9e9);
    }

    .head .c-val {
        text-align: center;
        color: #7a0040;
        padding: 0;
        background: linear-gradient(#fbdca0, #efae48);
    }

    .active .c-num {
        background: linear-gradient(#fbdca0, #f3bf70);
    }

    .active .c-name {
        background: #0078d7;
        color: #fff;
    }

    .box {
        box-sizing: border-box;
        width: 12px;
        height: 12px;
        margin: 0 6px 0 2px;
        line-height: 10px;
        text-align: center;
        color: #222;
        border: 1px solid #aaa;
        background: #fff;
    }

    .branch {
        align-self: stretch;
        box-sizing: border-box;
        width: 16px;
        margin: 0 5px 0 9px;
        border-left: 1px solid #aaa;
    }

    .branch i {
        display: block;
        height: 9px;
        border-bottom: 1px solid #aaa;
    }

    .branch.last {
        border-left: 0;
    }

    .branch.last i {
        border-left: 1px solid #aaa;
    }

    .active .branch,
    .active .branch i {
        border-color: #cfe4f8;
    }

    .dialog {
        position: absolute;
        left: 697px;
        top: 114px;
        box-sizing: border-box;
        width: 642px;
        height: 570px;
        display: flex;
        flex-direction: column;
        padding: 0 9px 4px 6px;
        border: 1px solid #555;
        background: linear-gradient(#b8c9d9, #dce6f0 7%, #dde7f2);
    }

    .dlg-title {
        flex: 0 0 33px;
        height: 33px;
        line-height: 36px;
        color: #8c8c8c;
    }

    .dlg-tools {
        flex: 0 0 57px;
        box-sizing: border-box;
        background: linear-gradient(#fff, #eee);
        border: 1px solid #e8eef4;
        margin-right: -1px;
    }

    .dlg-row {
        display: flex;
        align-items: center;
        gap: 10px;
        height: 31px;
        padding-left: 7px;
        white-space: nowrap;
    }

    .dlg-row.second {
        height: 22px;
        gap: 7px;
    }

    .dlg-row .sep {
        height: 18px;
        margin: 0 -3px;
    }

    .off {
        color: #8c8c8c;
    }

    .grip {
        width: 2px;
        height: 14px;
        border-left: 2px dotted #999;
        margin-right: -5px;
    }

    .rebar-combo {
        display: flex;
        align-items: center;
        justify-content: space-between;
        box-sizing: border-box;
        width: 133px;
        height: 23px;
        margin-left: -5px;
        padding: 0 6px 0 2px;
        color: #777;
        border: 1px solid #777;
        background: #f4f4f4;
    }

    .canvas {
        flex: 0 0 442px;
        box-sizing: border-box;
        width: 617px;
        margin: 3px 0 0 5px;
        border: 2px solid #e01010;
        background: #000;
    }

    .canvas svg {
        display: block;
        width: 613px;
        height: 438px;
    }

    .axis-num text {
        font: 11px "Liberation Sans", sans-serif;
        fill: #666;
    }

    .note {
        font-size: 16px;
        fill: #fff;
    }

    .note-green {
        font: 15.2px "Liberation Sans", sans-serif;
        fill: #3fd63f;
    }

    .dim text {
        font: 16px "Liberation Sans", sans-serif;
        letter-spacing: .3px;
        fill: #fff;
    }

    .dlg-status {
        flex: 0 0 24px;
        display: flex;
        gap: 2px;
        margin-top: 6px;
        margin-right: -1px;
    }

    .coord,
    .status-rest {
        box-sizing: border-box;
        height: 24px;
        line-height: 19px;
        background: linear-gradient(#fff, #f0f0f0);
        border: 1px solid #dcdcdc;
    }

    .coord {
        flex: 0 0 148px;
        padding-left: 6px;
    }

    .status-rest {
        flex: 1;
        display: flex;
        justify-content: flex-end;
        align-items: flex-end;
    }

    .status-rest svg {
        width: 9px;
        height: 9px;
    }

    .ime {
        position: absolute;
        left: 960px;
        top: 0;
        width: 206px;
        height: 12px;
    }

    .ime svg {
        display: block;
        width: 206px;
        height: 12px;
    }

    .peek {
        position: absolute;
        left: 1291px;
        top: 22px;
        width: 53px;
        height: 46px;
        box-sizing: border-box;
        padding: 1px 1px 1px 2px;
        background: #f6f6f6;
    }

    .peek-top {
        display: flex;
        justify-content: space-between;
        height: 18px;
        color: #b0b0b0;
        padding-left: 2px;
        font: 12px/17px "Liberation Sans", sans-serif;
    }

    .peek-top i {
        width: 19px;
        height: 18px;
        background: #e2e2e2;
    }

    .peek-btn {
        margin-top: 6px;
        height: 21px;
        line-height: 19px;
        text-align: center;
        box-sizing: border-box;
        color: #111;
        background: #eee;
        border: 1px solid #444;
        box-shadow: 1px 1px 2px #666;
    }
</style>
